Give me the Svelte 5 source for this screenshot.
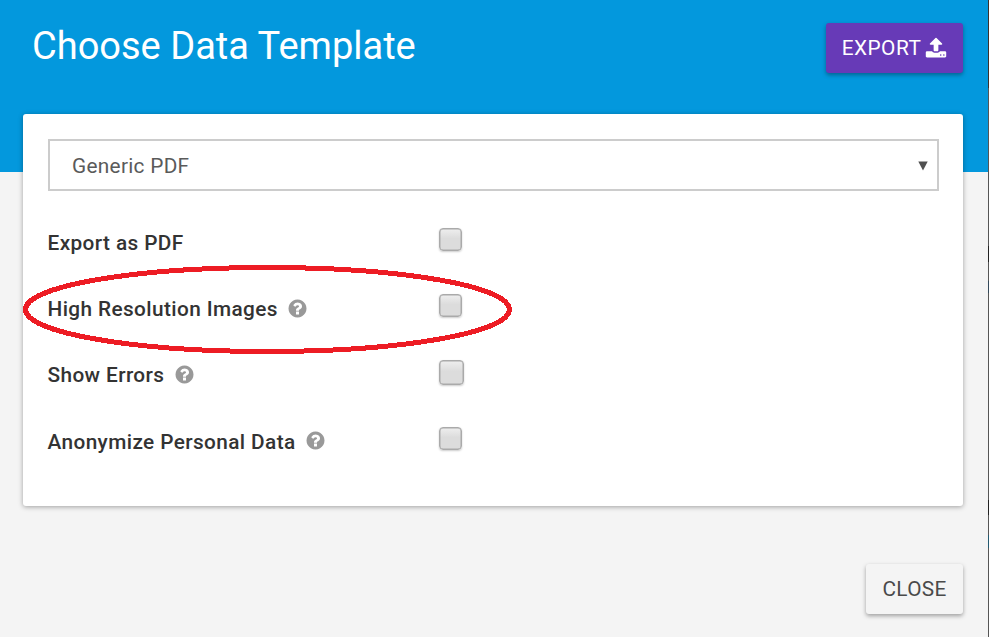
<script>
  const options = [
    { label: 'Export as PDF', help: false },
    { label: 'High Resolution Images', help: true },
    { label: 'Show Errors', help: true, large: true },
    { label: 'Anonymize Personal Data', help: true }
  ];
</script>

<div class="page">
  <header>
    <h1>Choose Data Template</h1>
    <button class="export">
      <span>EXPORT</span>
      <svg width="22" height="22" viewBox="0 0 1792 1792" fill="currentColor"><path d="M1344 1472q0-26-19-45t-45-19-45 19-19 45 19 45 45 19 45-19 19-45zm256 0q0-26-19-45t-45-19-45 19-19 45 19 45 45 19 45-19 19-45zm128-224v320q0 40-28 68t-68 28h-1472q-40 0-68-28t-28-68v-320q0-40 28-68t68-28h427q21 56 70.500 92t110.500 36h256q61 0 110.500-36t70.500-92h427q40 0 68 28t28 68zm-325-648q-17 40-59 40h-256v448q0 26-19 45t-45 19h-256q-26 0-45-19t-19-45v-448h-256q-42 0-59-40-17-39 14-69l448-448q18-19 45-19t45 19l448 448q31 30 14 69z" /></svg>
    </button>
  </header>

  <main>
    <div class="select">
      <span>Generic PDF</span>
      <svg width="10" height="10" viewBox="0 0 10 10"><path d="M0.300 0.500H9.700L5 9.500Z" fill="#505050" /></svg>
    </div>
    {#each options as option}
      <div class="row">
        <div class="label">
          <span>{option.label}</span>
          {#if option.help}
            <svg width="21" height="21" viewBox="0 0 1792 1792" fill="#999"><path d="M1024 1376v-192q0-14-9-23t-23-9h-192q-14 0-23 9t-9 23v192q0 14 9 23t23 9h192q14 0 23-9t9-23zm256-672q0-88-55.500-163t-138.500-116-170-41q-243 0-371 213-15 24 8 42l132 100q7 6 19 6 16 0 25-12 53-68 86-92 34-24 86-24 48 0 85.500 26t37.500 59q0 38-20 61t-68 45q-63 28-115.500 86.500t-52.500 125.500v36q0 14 9 23t23 9h192q14 0 23-9t9-23q0-19 21.500-49.500t54.500-49.500q32-18 49-28.500t46-35 44.500-48 28-60.500 12.500-81zm384 192q0 209-103 385.500t-279.500 279.500-385.500 103-385.500-103-279.500-279.500-103-385.500 103-385.500 279.500-279.500 385.500-103 385.500 103 279.500 279.500 103 385.500z" /></svg>
          {/if}
        </div>
        <div class="check" class:large={option.large}></div>
      </div>
    {/each}
  </main>

  <footer><button class="close">CLOSE</button></footer>

  <svg class="highlight" width="490" height="92" viewBox="0 0 490 92"><ellipse cx="244.500" cy="45.500" rx="242" ry="42" fill="none" stroke="#ed1c24" stroke-width="5" shape-rendering="crispEdges" /></svg>
  <div class="edge"></div>
</div>

<style>
  .page {
    position: relative;
    box-sizing: border-box;
    width: 989px;
    height: 637px;
    padding: 0 26px 0 23px;
    overflow: hidden;
    font-family: Roboto, 'Liberation Sans', sans-serif;
    background: linear-gradient(#0398dd 172px, #f4f4f4 172px);
  }
  header {
    display: flex;
    justify-content: space-between;
    align-items: flex-start;
    height: 114px;
  }
  h1 {
    margin: 23px 0 0 9px;
    font-size: 38px;
    font-weight: 400;
    line-height: 46px;
    color: #fff;
    white-space: nowrap;
  }
  button {
    display: flex;
    align-items: center;
    justify-content: center;
    padding: 0;
    border: 0;
    border-radius: 3px;
    font: 400 20.800px/24px Roboto, 'Liberation Sans', sans-serif;
    letter-spacing: 0.300px;
    box-shadow: 0 2px 4px rgba(0, 0, 0, 0.35);
  }
  .export {
    gap: 4px;
    width: 137px;
    height: 50px;
    margin-top: 23px;
    letter-spacing: 0.500px;
    color: #fff;
    background: #673ab7;
  }
  .export svg {
    margin-top: -1px;
  }
  main {
    box-sizing: border-box;
    height: 392px;
    padding: 25px 24px 0 25px;
    border-radius: 3px;
    background: #fff;
    box-shadow: 0 1px 5px rgba(0, 0, 0, 0.35);
  }
  .select {
    display: flex;
    justify-content: space-between;
    align-items: center;
    box-sizing: border-box;
    height: 52px;
    margin-bottom: 19px;
    padding: 1px 9px 0 22px;
    border: 2px solid #ccc;
    font-size: 20.800px;
    letter-spacing: 0.300px;
    color: #5a5a5a;
  }
  .row {
    display: flex;
    align-items: flex-start;
    height: 66.200px;
  }
  .label {
    display: flex;
    align-items: center;
    gap: 9.500px;
    width: 391px;
    height: 66px;
    font-size: 20.800px;
    font-weight: 500;
    letter-spacing: 0.390px;
    color: #333;
    white-space: nowrap;
  }
  .label span {
    margin-left: -0.500px;
  }
  .label svg {
    margin-top: -1.500px;
  }
  .check {
    box-sizing: border-box;
    width: 23px;
    height: 23px;
    margin-top: 18px;
    border: 1.500px solid #aaa;
    border-radius: 4px;
    background: linear-gradient(#eee, #dcdcdc 45%, #dcdcdc);
    box-shadow: 0 1px 2px rgba(0, 0, 0, 0.2), inset 0 0 0 0.500px #aaa;
  }
  .check.large {
    width: 25px;
    height: 25px;
  }
  footer {
    display: flex;
    justify-content: flex-end;
    padding-top: 58px;
  }
  .close {
    width: 97px;
    height: 50px;
    color: #4a4a4a;
    background: #f4f4f4;
  }
  .highlight {
    position: absolute;
    left: 23px;
    top: 264px;
  }
  .edge {
    position: absolute;
    top: 0;
    right: 0;
    width: 1px;
    height: 100%;
    background: linear-gradient(
      #3c302a 88px, #555 88px, #555 246px, #222 246px, #222 262px, #555 262px,
      #555 281px, #34495a 281px, #34495a 293px, #555 293px, #555 500px, #222 500px,
      #222 515px, #555 515px, #555 535px, #245a70 535px, #245a70 548px, #555 548px
    );
  }
</style>
